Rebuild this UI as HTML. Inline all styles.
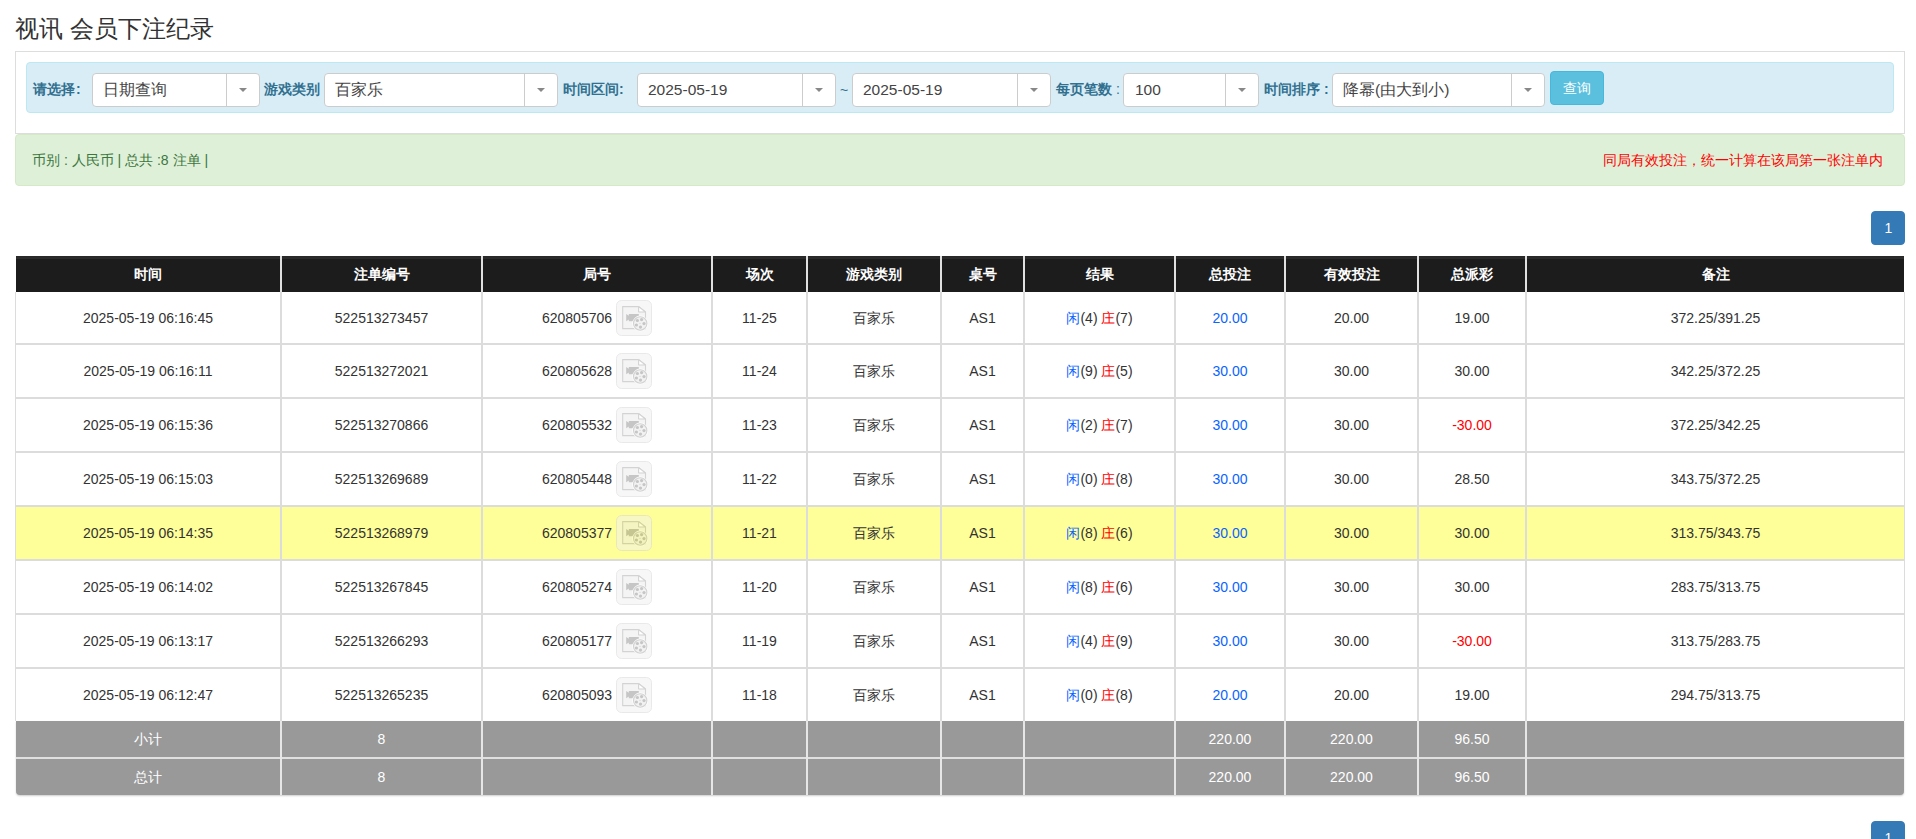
<!DOCTYPE html>
<html><head><meta charset="utf-8"><title>视讯 会员下注纪录</title>
<style>
html,body{margin:0;padding:0;background:#fff;width:1916px;height:839px;overflow:hidden;position:relative;font-family:"Liberation Sans", sans-serif;font-size:14px;color:#333}
div,span{box-sizing:border-box}
.abs{position:absolute}
.title{position:absolute;left:15px;top:11px;font-size:24px;line-height:36px;color:#333;white-space:nowrap}
.panel{position:absolute;left:15px;top:51px;width:1890px;height:83px;border:1px solid #ddd;background:#fff}
.info{position:absolute;left:26px;top:62px;width:1868px;height:51px;border:1px solid #bce8f1;background:#d9edf7;border-radius:4px}
.lbl{position:absolute;top:73px;height:33px;line-height:33px;font-weight:bold;color:#31708f;font-size:14px;white-space:nowrap}
.lc{font-weight:normal}
.tilde{position:absolute;top:74px;height:33px;line-height:33px;color:#31708f;font-size:14px}
.sel{position:absolute;background:#fff;border:1px solid #ccc;border-radius:4px}
.st{position:absolute;left:10px;top:0;line-height:31px;font-size:15.5px;color:#444;white-space:nowrap}
.sep{position:absolute;top:0;bottom:0;width:1px;background:#ccc}
.arr{position:absolute;top:14px;width:0;height:0;border-left:4px solid transparent;border-right:4px solid transparent;border-top:4px solid #888}
.btn{position:absolute;left:1550px;top:71px;width:54px;height:34px;background:#5bc0de;border:1px solid #46b8da;border-radius:4px;color:#fff;text-align:center;line-height:32px;font-size:14px}
.ok{position:absolute;left:15px;top:134px;width:1890px;height:52px;border:1px solid #d6e9c6;background:#dff0d8;border-radius:4px}
.okt{position:absolute;left:32px;top:134px;height:52px;line-height:52px;color:#3c763d;font-size:14px;white-space:nowrap}
.warn{position:absolute;right:33px;top:134px;height:52px;line-height:52px;color:#f00;font-size:14px;white-space:nowrap}
.pg{position:absolute;left:1871px;width:34px;height:34px;background:#337ab7;border:1px solid #337ab7;border-radius:4px;color:#fff;text-align:center;line-height:32px;font-size:14px;padding-left:1px}
.c{position:absolute;text-align:center;white-space:nowrap;font-size:14px;color:#333}
.th{color:#fff;font-weight:bold}
.tf{color:#fff}
.hdr{position:absolute;background:linear-gradient(#262626 0,#2b2b2b 1px,#2b2b2b 3px,#1c1c1c 3px)}
.yel{position:absolute;background:#ffff99}
.ft{position:absolute;background:#999;border-radius:0 0 4px 4px;box-shadow:0 1px 2px rgba(0,0,0,.2)}
.hl{position:absolute;height:2px;background:#dcdcdc}
.hlf{position:absolute;height:2px;background:#e0e0e0}
.vl{position:absolute;width:2px;background:#dcdcdc}
.vl1{position:absolute;width:1px;background:#dcdcdc}
.vlh{position:absolute;width:2px;background:#e0e0e0}
.vlf{position:absolute;width:2px;background:#e6e6e6}
.blu{color:#0a64ff}
.red{color:#f00}
.ib{display:inline-block;width:36px;height:36px;vertical-align:middle;margin-left:4px;line-height:0;position:relative;top:-1px}
.ib svg{position:absolute;left:0;top:0}
</style></head><body>
<div class="title">视讯 会员下注纪录</div>
<div class="panel"></div>
<div class="info"></div>
<div class="lbl" style="left:33px">请选择<span style="margin-left:1px">:</span></div>
<div class="sel" style="left:92px;top:73px;width:168px;height:34px"><span class="st">日期查询</span><span class="sep" style="left:133px"></span><span class="arr" style="left:146px"></span></div>
<div class="lbl" style="left:264px">游戏类别</div>
<div class="sel" style="left:324px;top:73px;width:234px;height:34px"><span class="st">百家乐</span><span class="sep" style="left:199px"></span><span class="arr" style="left:212px"></span></div>
<div class="lbl" style="left:563px">时间区间:</div>
<div class="sel" style="left:637px;top:73px;width:199px;height:34px"><span class="st">2025-05-19</span><span class="sep" style="left:164px"></span><span class="arr" style="left:177px"></span></div>
<div class="tilde" style="left:840px">~</div>
<div class="sel" style="left:852px;top:73px;width:199px;height:34px"><span class="st">2025-05-19</span><span class="sep" style="left:164px"></span><span class="arr" style="left:177px"></span></div>
<div class="lbl" style="left:1056px">每页笔数 <span class="lc">:</span></div>
<div class="sel" style="left:1123px;top:73px;width:136px;height:34px"><span class="st"><span style="margin-left:1px">100</span></span><span class="sep" style="left:101px"></span><span class="arr" style="left:114px"></span></div>
<div class="lbl" style="left:1264px">时间排序 :</div>
<div class="sel" style="left:1332px;top:73px;width:213px;height:34px"><span class="st">降幂(由大到小)</span><span class="sep" style="left:178px"></span><span class="arr" style="left:191px"></span></div>
<div class="btn">查询</div>
<div class="ok"></div>
<div class="okt">币别 : 人民币 | 总共 :8 注单 |</div>
<div class="warn">同局有效投注，统一计算在该局第一张注单内</div>
<div class="pg" style="top:211px">1</div>
<div class="hdr" style="left:16px;top:256px;width:1888px;height:36px"></div>
<div class="c th" style="left:16px;top:256px;width:264px;height:36px;line-height:36px">时间</div>
<div class="c th" style="left:282px;top:256px;width:199px;height:36px;line-height:36px">注单编号</div>
<div class="c th" style="left:483px;top:256px;width:228px;height:36px;line-height:36px">局号</div>
<div class="c th" style="left:713px;top:256px;width:93px;height:36px;line-height:36px">场次</div>
<div class="c th" style="left:808px;top:256px;width:132px;height:36px;line-height:36px">游戏类别</div>
<div class="c th" style="left:942px;top:256px;width:81px;height:36px;line-height:36px">桌号</div>
<div class="c th" style="left:1025px;top:256px;width:149px;height:36px;line-height:36px">结果</div>
<div class="c th" style="left:1176px;top:256px;width:108px;height:36px;line-height:36px">总投注</div>
<div class="c th" style="left:1286px;top:256px;width:131px;height:36px;line-height:36px">有效投注</div>
<div class="c th" style="left:1419px;top:256px;width:106px;height:36px;line-height:36px">总派彩</div>
<div class="c th" style="left:1527px;top:256px;width:377px;height:36px;line-height:36px">备注</div>
<div class="c " style="left:16px;top:293px;width:264px;height:51px;line-height:51px">2025-05-19 06:16:45</div>
<div class="c " style="left:282px;top:293px;width:199px;height:51px;line-height:51px">522513273457</div>
<div class="c " style="left:483px;top:293px;width:228px;height:51px;line-height:51px">620805706<span class="ib"><svg width="36" height="36" viewBox="0 0 36 36"><g opacity=".5"><rect x=".5" y=".5" width="35" height="35" rx="5" fill="#f1f1f1" stroke="#d5d5d5"/><path d="M6.7 6.6h15.9l6.9 5.4v16.6h-22.8z" fill="#ebebeb" stroke="#a8a8a8" stroke-width="1.1"/><path d="M22.6 6.6v5.4h6.9z" fill="#fff" stroke="#a8a8a8" stroke-width="1.1" stroke-linejoin="bevel"/><path d="M10.2 14.1l2.6 1.6v-1.7h10v7.2h-10v-1.6l-2.6 1.6z" fill="#8e8e8e"/><circle cx="24.2" cy="23.5" r="7.9" fill="#fff"/><circle cx="24.2" cy="23.5" r="6.7" fill="#e6e6e6" stroke="#a8a8a8" stroke-width="1.1"/><g fill="#8e8e8e"><circle cx="21.4" cy="20.5" r="1.6"/><circle cx="25.6" cy="19.6" r="1.6"/><circle cx="28" cy="23.6" r="1.6"/><circle cx="24.5" cy="27.1" r="1.6"/><circle cx="20.4" cy="25" r="1.6"/><circle cx="24" cy="23.3" r=".5"/></g></g></svg></span></div>
<div class="c " style="left:713px;top:293px;width:93px;height:51px;line-height:51px">11-25</div>
<div class="c " style="left:808px;top:293px;width:132px;height:51px;line-height:51px">百家乐</div>
<div class="c " style="left:942px;top:293px;width:81px;height:51px;line-height:51px">AS1</div>
<div class="c " style="left:1025px;top:293px;width:149px;height:51px;line-height:51px"><span class="blu">闲</span>(4) <span class="red">庄</span>(7)</div>
<div class="c " style="left:1176px;top:293px;width:108px;height:51px;line-height:51px"><span class="blu">20.00</span></div>
<div class="c " style="left:1286px;top:293px;width:131px;height:51px;line-height:51px">20.00</div>
<div class="c " style="left:1419px;top:293px;width:106px;height:51px;line-height:51px"><span>19.00</span></div>
<div class="c " style="left:1527px;top:293px;width:377px;height:51px;line-height:51px">372.25/391.25</div>
<div class="c " style="left:16px;top:345px;width:264px;height:52px;line-height:52px">2025-05-19 06:16:11</div>
<div class="c " style="left:282px;top:345px;width:199px;height:52px;line-height:52px">522513272021</div>
<div class="c " style="left:483px;top:345px;width:228px;height:52px;line-height:52px">620805628<span class="ib"><svg width="36" height="36" viewBox="0 0 36 36"><g opacity=".5"><rect x=".5" y=".5" width="35" height="35" rx="5" fill="#f1f1f1" stroke="#d5d5d5"/><path d="M6.7 6.6h15.9l6.9 5.4v16.6h-22.8z" fill="#ebebeb" stroke="#a8a8a8" stroke-width="1.1"/><path d="M22.6 6.6v5.4h6.9z" fill="#fff" stroke="#a8a8a8" stroke-width="1.1" stroke-linejoin="bevel"/><path d="M10.2 14.1l2.6 1.6v-1.7h10v7.2h-10v-1.6l-2.6 1.6z" fill="#8e8e8e"/><circle cx="24.2" cy="23.5" r="7.9" fill="#fff"/><circle cx="24.2" cy="23.5" r="6.7" fill="#e6e6e6" stroke="#a8a8a8" stroke-width="1.1"/><g fill="#8e8e8e"><circle cx="21.4" cy="20.5" r="1.6"/><circle cx="25.6" cy="19.6" r="1.6"/><circle cx="28" cy="23.6" r="1.6"/><circle cx="24.5" cy="27.1" r="1.6"/><circle cx="20.4" cy="25" r="1.6"/><circle cx="24" cy="23.3" r=".5"/></g></g></svg></span></div>
<div class="c " style="left:713px;top:345px;width:93px;height:52px;line-height:52px">11-24</div>
<div class="c " style="left:808px;top:345px;width:132px;height:52px;line-height:52px">百家乐</div>
<div class="c " style="left:942px;top:345px;width:81px;height:52px;line-height:52px">AS1</div>
<div class="c " style="left:1025px;top:345px;width:149px;height:52px;line-height:52px"><span class="blu">闲</span>(9) <span class="red">庄</span>(5)</div>
<div class="c " style="left:1176px;top:345px;width:108px;height:52px;line-height:52px"><span class="blu">30.00</span></div>
<div class="c " style="left:1286px;top:345px;width:131px;height:52px;line-height:52px">30.00</div>
<div class="c " style="left:1419px;top:345px;width:106px;height:52px;line-height:52px"><span>30.00</span></div>
<div class="c " style="left:1527px;top:345px;width:377px;height:52px;line-height:52px">342.25/372.25</div>
<div class="c " style="left:16px;top:399px;width:264px;height:52px;line-height:52px">2025-05-19 06:15:36</div>
<div class="c " style="left:282px;top:399px;width:199px;height:52px;line-height:52px">522513270866</div>
<div class="c " style="left:483px;top:399px;width:228px;height:52px;line-height:52px">620805532<span class="ib"><svg width="36" height="36" viewBox="0 0 36 36"><g opacity=".5"><rect x=".5" y=".5" width="35" height="35" rx="5" fill="#f1f1f1" stroke="#d5d5d5"/><path d="M6.7 6.6h15.9l6.9 5.4v16.6h-22.8z" fill="#ebebeb" stroke="#a8a8a8" stroke-width="1.1"/><path d="M22.6 6.6v5.4h6.9z" fill="#fff" stroke="#a8a8a8" stroke-width="1.1" stroke-linejoin="bevel"/><path d="M10.2 14.1l2.6 1.6v-1.7h10v7.2h-10v-1.6l-2.6 1.6z" fill="#8e8e8e"/><circle cx="24.2" cy="23.5" r="7.9" fill="#fff"/><circle cx="24.2" cy="23.5" r="6.7" fill="#e6e6e6" stroke="#a8a8a8" stroke-width="1.1"/><g fill="#8e8e8e"><circle cx="21.4" cy="20.5" r="1.6"/><circle cx="25.6" cy="19.6" r="1.6"/><circle cx="28" cy="23.6" r="1.6"/><circle cx="24.5" cy="27.1" r="1.6"/><circle cx="20.4" cy="25" r="1.6"/><circle cx="24" cy="23.3" r=".5"/></g></g></svg></span></div>
<div class="c " style="left:713px;top:399px;width:93px;height:52px;line-height:52px">11-23</div>
<div class="c " style="left:808px;top:399px;width:132px;height:52px;line-height:52px">百家乐</div>
<div class="c " style="left:942px;top:399px;width:81px;height:52px;line-height:52px">AS1</div>
<div class="c " style="left:1025px;top:399px;width:149px;height:52px;line-height:52px"><span class="blu">闲</span>(2) <span class="red">庄</span>(7)</div>
<div class="c " style="left:1176px;top:399px;width:108px;height:52px;line-height:52px"><span class="blu">30.00</span></div>
<div class="c " style="left:1286px;top:399px;width:131px;height:52px;line-height:52px">30.00</div>
<div class="c " style="left:1419px;top:399px;width:106px;height:52px;line-height:52px"><span class="red">-30.00</span></div>
<div class="c " style="left:1527px;top:399px;width:377px;height:52px;line-height:52px">372.25/342.25</div>
<div class="c " style="left:16px;top:453px;width:264px;height:52px;line-height:52px">2025-05-19 06:15:03</div>
<div class="c " style="left:282px;top:453px;width:199px;height:52px;line-height:52px">522513269689</div>
<div class="c " style="left:483px;top:453px;width:228px;height:52px;line-height:52px">620805448<span class="ib"><svg width="36" height="36" viewBox="0 0 36 36"><g opacity=".5"><rect x=".5" y=".5" width="35" height="35" rx="5" fill="#f1f1f1" stroke="#d5d5d5"/><path d="M6.7 6.6h15.9l6.9 5.4v16.6h-22.8z" fill="#ebebeb" stroke="#a8a8a8" stroke-width="1.1"/><path d="M22.6 6.6v5.4h6.9z" fill="#fff" stroke="#a8a8a8" stroke-width="1.1" stroke-linejoin="bevel"/><path d="M10.2 14.1l2.6 1.6v-1.7h10v7.2h-10v-1.6l-2.6 1.6z" fill="#8e8e8e"/><circle cx="24.2" cy="23.5" r="7.9" fill="#fff"/><circle cx="24.2" cy="23.5" r="6.7" fill="#e6e6e6" stroke="#a8a8a8" stroke-width="1.1"/><g fill="#8e8e8e"><circle cx="21.4" cy="20.5" r="1.6"/><circle cx="25.6" cy="19.6" r="1.6"/><circle cx="28" cy="23.6" r="1.6"/><circle cx="24.5" cy="27.1" r="1.6"/><circle cx="20.4" cy="25" r="1.6"/><circle cx="24" cy="23.3" r=".5"/></g></g></svg></span></div>
<div class="c " style="left:713px;top:453px;width:93px;height:52px;line-height:52px">11-22</div>
<div class="c " style="left:808px;top:453px;width:132px;height:52px;line-height:52px">百家乐</div>
<div class="c " style="left:942px;top:453px;width:81px;height:52px;line-height:52px">AS1</div>
<div class="c " style="left:1025px;top:453px;width:149px;height:52px;line-height:52px"><span class="blu">闲</span>(0) <span class="red">庄</span>(8)</div>
<div class="c " style="left:1176px;top:453px;width:108px;height:52px;line-height:52px"><span class="blu">30.00</span></div>
<div class="c " style="left:1286px;top:453px;width:131px;height:52px;line-height:52px">30.00</div>
<div class="c " style="left:1419px;top:453px;width:106px;height:52px;line-height:52px"><span>28.50</span></div>
<div class="c " style="left:1527px;top:453px;width:377px;height:52px;line-height:52px">343.75/372.25</div>
<div class="yel" style="left:16px;top:507px;width:1888px;height:52px"></div>
<div class="c " style="left:16px;top:507px;width:264px;height:52px;line-height:52px">2025-05-19 06:14:35</div>
<div class="c " style="left:282px;top:507px;width:199px;height:52px;line-height:52px">522513268979</div>
<div class="c " style="left:483px;top:507px;width:228px;height:52px;line-height:52px">620805377<span class="ib"><svg width="36" height="36" viewBox="0 0 36 36"><g opacity=".5"><rect x=".5" y=".5" width="35" height="35" rx="5" fill="#f1f1f1" stroke="#d5d5d5"/><path d="M6.7 6.6h15.9l6.9 5.4v16.6h-22.8z" fill="#ebebeb" stroke="#a8a8a8" stroke-width="1.1"/><path d="M22.6 6.6v5.4h6.9z" fill="#fff" stroke="#a8a8a8" stroke-width="1.1" stroke-linejoin="bevel"/><path d="M10.2 14.1l2.6 1.6v-1.7h10v7.2h-10v-1.6l-2.6 1.6z" fill="#8e8e8e"/><circle cx="24.2" cy="23.5" r="7.9" fill="#fff"/><circle cx="24.2" cy="23.5" r="6.7" fill="#e6e6e6" stroke="#a8a8a8" stroke-width="1.1"/><g fill="#8e8e8e"><circle cx="21.4" cy="20.5" r="1.6"/><circle cx="25.6" cy="19.6" r="1.6"/><circle cx="28" cy="23.6" r="1.6"/><circle cx="24.5" cy="27.1" r="1.6"/><circle cx="20.4" cy="25" r="1.6"/><circle cx="24" cy="23.3" r=".5"/></g></g></svg></span></div>
<div class="c " style="left:713px;top:507px;width:93px;height:52px;line-height:52px">11-21</div>
<div class="c " style="left:808px;top:507px;width:132px;height:52px;line-height:52px">百家乐</div>
<div class="c " style="left:942px;top:507px;width:81px;height:52px;line-height:52px">AS1</div>
<div class="c " style="left:1025px;top:507px;width:149px;height:52px;line-height:52px"><span class="blu">闲</span>(8) <span class="red">庄</span>(6)</div>
<div class="c " style="left:1176px;top:507px;width:108px;height:52px;line-height:52px"><span class="blu">30.00</span></div>
<div class="c " style="left:1286px;top:507px;width:131px;height:52px;line-height:52px">30.00</div>
<div class="c " style="left:1419px;top:507px;width:106px;height:52px;line-height:52px"><span>30.00</span></div>
<div class="c " style="left:1527px;top:507px;width:377px;height:52px;line-height:52px">313.75/343.75</div>
<div class="c " style="left:16px;top:561px;width:264px;height:52px;line-height:52px">2025-05-19 06:14:02</div>
<div class="c " style="left:282px;top:561px;width:199px;height:52px;line-height:52px">522513267845</div>
<div class="c " style="left:483px;top:561px;width:228px;height:52px;line-height:52px">620805274<span class="ib"><svg width="36" height="36" viewBox="0 0 36 36"><g opacity=".5"><rect x=".5" y=".5" width="35" height="35" rx="5" fill="#f1f1f1" stroke="#d5d5d5"/><path d="M6.7 6.6h15.9l6.9 5.4v16.6h-22.8z" fill="#ebebeb" stroke="#a8a8a8" stroke-width="1.1"/><path d="M22.6 6.6v5.4h6.9z" fill="#fff" stroke="#a8a8a8" stroke-width="1.1" stroke-linejoin="bevel"/><path d="M10.2 14.1l2.6 1.6v-1.7h10v7.2h-10v-1.6l-2.6 1.6z" fill="#8e8e8e"/><circle cx="24.2" cy="23.5" r="7.9" fill="#fff"/><circle cx="24.2" cy="23.5" r="6.7" fill="#e6e6e6" stroke="#a8a8a8" stroke-width="1.1"/><g fill="#8e8e8e"><circle cx="21.4" cy="20.5" r="1.6"/><circle cx="25.6" cy="19.6" r="1.6"/><circle cx="28" cy="23.6" r="1.6"/><circle cx="24.5" cy="27.1" r="1.6"/><circle cx="20.4" cy="25" r="1.6"/><circle cx="24" cy="23.3" r=".5"/></g></g></svg></span></div>
<div class="c " style="left:713px;top:561px;width:93px;height:52px;line-height:52px">11-20</div>
<div class="c " style="left:808px;top:561px;width:132px;height:52px;line-height:52px">百家乐</div>
<div class="c " style="left:942px;top:561px;width:81px;height:52px;line-height:52px">AS1</div>
<div class="c " style="left:1025px;top:561px;width:149px;height:52px;line-height:52px"><span class="blu">闲</span>(8) <span class="red">庄</span>(6)</div>
<div class="c " style="left:1176px;top:561px;width:108px;height:52px;line-height:52px"><span class="blu">30.00</span></div>
<div class="c " style="left:1286px;top:561px;width:131px;height:52px;line-height:52px">30.00</div>
<div class="c " style="left:1419px;top:561px;width:106px;height:52px;line-height:52px"><span>30.00</span></div>
<div class="c " style="left:1527px;top:561px;width:377px;height:52px;line-height:52px">283.75/313.75</div>
<div class="c " style="left:16px;top:615px;width:264px;height:52px;line-height:52px">2025-05-19 06:13:17</div>
<div class="c " style="left:282px;top:615px;width:199px;height:52px;line-height:52px">522513266293</div>
<div class="c " style="left:483px;top:615px;width:228px;height:52px;line-height:52px">620805177<span class="ib"><svg width="36" height="36" viewBox="0 0 36 36"><g opacity=".5"><rect x=".5" y=".5" width="35" height="35" rx="5" fill="#f1f1f1" stroke="#d5d5d5"/><path d="M6.7 6.6h15.9l6.9 5.4v16.6h-22.8z" fill="#ebebeb" stroke="#a8a8a8" stroke-width="1.1"/><path d="M22.6 6.6v5.4h6.9z" fill="#fff" stroke="#a8a8a8" stroke-width="1.1" stroke-linejoin="bevel"/><path d="M10.2 14.1l2.6 1.6v-1.7h10v7.2h-10v-1.6l-2.6 1.6z" fill="#8e8e8e"/><circle cx="24.2" cy="23.5" r="7.9" fill="#fff"/><circle cx="24.2" cy="23.5" r="6.7" fill="#e6e6e6" stroke="#a8a8a8" stroke-width="1.1"/><g fill="#8e8e8e"><circle cx="21.4" cy="20.5" r="1.6"/><circle cx="25.6" cy="19.6" r="1.6"/><circle cx="28" cy="23.6" r="1.6"/><circle cx="24.5" cy="27.1" r="1.6"/><circle cx="20.4" cy="25" r="1.6"/><circle cx="24" cy="23.3" r=".5"/></g></g></svg></span></div>
<div class="c " style="left:713px;top:615px;width:93px;height:52px;line-height:52px">11-19</div>
<div class="c " style="left:808px;top:615px;width:132px;height:52px;line-height:52px">百家乐</div>
<div class="c " style="left:942px;top:615px;width:81px;height:52px;line-height:52px">AS1</div>
<div class="c " style="left:1025px;top:615px;width:149px;height:52px;line-height:52px"><span class="blu">闲</span>(4) <span class="red">庄</span>(9)</div>
<div class="c " style="left:1176px;top:615px;width:108px;height:52px;line-height:52px"><span class="blu">30.00</span></div>
<div class="c " style="left:1286px;top:615px;width:131px;height:52px;line-height:52px">30.00</div>
<div class="c " style="left:1419px;top:615px;width:106px;height:52px;line-height:52px"><span class="red">-30.00</span></div>
<div class="c " style="left:1527px;top:615px;width:377px;height:52px;line-height:52px">313.75/283.75</div>
<div class="c " style="left:16px;top:669px;width:264px;height:52px;line-height:52px">2025-05-19 06:12:47</div>
<div class="c " style="left:282px;top:669px;width:199px;height:52px;line-height:52px">522513265235</div>
<div class="c " style="left:483px;top:669px;width:228px;height:52px;line-height:52px">620805093<span class="ib"><svg width="36" height="36" viewBox="0 0 36 36"><g opacity=".5"><rect x=".5" y=".5" width="35" height="35" rx="5" fill="#f1f1f1" stroke="#d5d5d5"/><path d="M6.7 6.6h15.9l6.9 5.4v16.6h-22.8z" fill="#ebebeb" stroke="#a8a8a8" stroke-width="1.1"/><path d="M22.6 6.6v5.4h6.9z" fill="#fff" stroke="#a8a8a8" stroke-width="1.1" stroke-linejoin="bevel"/><path d="M10.2 14.1l2.6 1.6v-1.7h10v7.2h-10v-1.6l-2.6 1.6z" fill="#8e8e8e"/><circle cx="24.2" cy="23.5" r="7.9" fill="#fff"/><circle cx="24.2" cy="23.5" r="6.7" fill="#e6e6e6" stroke="#a8a8a8" stroke-width="1.1"/><g fill="#8e8e8e"><circle cx="21.4" cy="20.5" r="1.6"/><circle cx="25.6" cy="19.6" r="1.6"/><circle cx="28" cy="23.6" r="1.6"/><circle cx="24.5" cy="27.1" r="1.6"/><circle cx="20.4" cy="25" r="1.6"/><circle cx="24" cy="23.3" r=".5"/></g></g></svg></span></div>
<div class="c " style="left:713px;top:669px;width:93px;height:52px;line-height:52px">11-18</div>
<div class="c " style="left:808px;top:669px;width:132px;height:52px;line-height:52px">百家乐</div>
<div class="c " style="left:942px;top:669px;width:81px;height:52px;line-height:52px">AS1</div>
<div class="c " style="left:1025px;top:669px;width:149px;height:52px;line-height:52px"><span class="blu">闲</span>(0) <span class="red">庄</span>(8)</div>
<div class="c " style="left:1176px;top:669px;width:108px;height:52px;line-height:52px"><span class="blu">20.00</span></div>
<div class="c " style="left:1286px;top:669px;width:131px;height:52px;line-height:52px">20.00</div>
<div class="c " style="left:1419px;top:669px;width:106px;height:52px;line-height:52px"><span>19.00</span></div>
<div class="c " style="left:1527px;top:669px;width:377px;height:52px;line-height:52px">294.75/313.75</div>
<div class="hl" style="left:16px;top:343px;width:1888px"></div>
<div class="hl" style="left:16px;top:397px;width:1888px"></div>
<div class="hl" style="left:16px;top:451px;width:1888px"></div>
<div class="hl" style="left:16px;top:505px;width:1888px"></div>
<div class="hl" style="left:16px;top:559px;width:1888px"></div>
<div class="hl" style="left:16px;top:613px;width:1888px"></div>
<div class="hl" style="left:16px;top:667px;width:1888px"></div>
<div class="ft" style="left:16px;top:721px;width:1888px;height:74px"></div>
<div class="c tf" style="left:16px;top:721px;width:264px;height:36px;line-height:36px">小计</div>
<div class="c tf" style="left:282px;top:721px;width:199px;height:36px;line-height:36px">8</div>
<div class="c tf" style="left:483px;top:721px;width:228px;height:36px;line-height:36px"></div>
<div class="c tf" style="left:713px;top:721px;width:93px;height:36px;line-height:36px"></div>
<div class="c tf" style="left:808px;top:721px;width:132px;height:36px;line-height:36px"></div>
<div class="c tf" style="left:942px;top:721px;width:81px;height:36px;line-height:36px"></div>
<div class="c tf" style="left:1025px;top:721px;width:149px;height:36px;line-height:36px"></div>
<div class="c tf" style="left:1176px;top:721px;width:108px;height:36px;line-height:36px">220.00</div>
<div class="c tf" style="left:1286px;top:721px;width:131px;height:36px;line-height:36px">220.00</div>
<div class="c tf" style="left:1419px;top:721px;width:106px;height:36px;line-height:36px">96.50</div>
<div class="c tf" style="left:1527px;top:721px;width:377px;height:36px;line-height:36px"></div>
<div class="c tf" style="left:16px;top:759px;width:264px;height:36px;line-height:36px">总计</div>
<div class="c tf" style="left:282px;top:759px;width:199px;height:36px;line-height:36px">8</div>
<div class="c tf" style="left:483px;top:759px;width:228px;height:36px;line-height:36px"></div>
<div class="c tf" style="left:713px;top:759px;width:93px;height:36px;line-height:36px"></div>
<div class="c tf" style="left:808px;top:759px;width:132px;height:36px;line-height:36px"></div>
<div class="c tf" style="left:942px;top:759px;width:81px;height:36px;line-height:36px"></div>
<div class="c tf" style="left:1025px;top:759px;width:149px;height:36px;line-height:36px"></div>
<div class="c tf" style="left:1176px;top:759px;width:108px;height:36px;line-height:36px">220.00</div>
<div class="c tf" style="left:1286px;top:759px;width:131px;height:36px;line-height:36px">220.00</div>
<div class="c tf" style="left:1419px;top:759px;width:106px;height:36px;line-height:36px">96.50</div>
<div class="c tf" style="left:1527px;top:759px;width:377px;height:36px;line-height:36px"></div>
<div class="hlf" style="left:16px;top:757px;width:1888px"></div>
<div class="vl1" style="left:15px;top:292px;height:429px"></div>
<div class="vlh" style="left:280px;top:256px;height:36px"></div>
<div class="vl" style="left:280px;top:292px;height:429px"></div>
<div class="vlf" style="left:280px;top:721px;height:74px"></div>
<div class="vlh" style="left:481px;top:256px;height:36px"></div>
<div class="vl" style="left:481px;top:292px;height:429px"></div>
<div class="vlf" style="left:481px;top:721px;height:74px"></div>
<div class="vlh" style="left:711px;top:256px;height:36px"></div>
<div class="vl" style="left:711px;top:292px;height:429px"></div>
<div class="vlf" style="left:711px;top:721px;height:74px"></div>
<div class="vlh" style="left:806px;top:256px;height:36px"></div>
<div class="vl" style="left:806px;top:292px;height:429px"></div>
<div class="vlf" style="left:806px;top:721px;height:74px"></div>
<div class="vlh" style="left:940px;top:256px;height:36px"></div>
<div class="vl" style="left:940px;top:292px;height:429px"></div>
<div class="vlf" style="left:940px;top:721px;height:74px"></div>
<div class="vlh" style="left:1023px;top:256px;height:36px"></div>
<div class="vl" style="left:1023px;top:292px;height:429px"></div>
<div class="vlf" style="left:1023px;top:721px;height:74px"></div>
<div class="vlh" style="left:1174px;top:256px;height:36px"></div>
<div class="vl" style="left:1174px;top:292px;height:429px"></div>
<div class="vlf" style="left:1174px;top:721px;height:74px"></div>
<div class="vlh" style="left:1284px;top:256px;height:36px"></div>
<div class="vl" style="left:1284px;top:292px;height:429px"></div>
<div class="vlf" style="left:1284px;top:721px;height:74px"></div>
<div class="vlh" style="left:1417px;top:256px;height:36px"></div>
<div class="vl" style="left:1417px;top:292px;height:429px"></div>
<div class="vlf" style="left:1417px;top:721px;height:74px"></div>
<div class="vlh" style="left:1525px;top:256px;height:36px"></div>
<div class="vl" style="left:1525px;top:292px;height:429px"></div>
<div class="vlf" style="left:1525px;top:721px;height:74px"></div>
<div class="vl1" style="left:1904px;top:292px;height:429px"></div>
<div class="pg" style="top:821px">1</div>
</body></html>
